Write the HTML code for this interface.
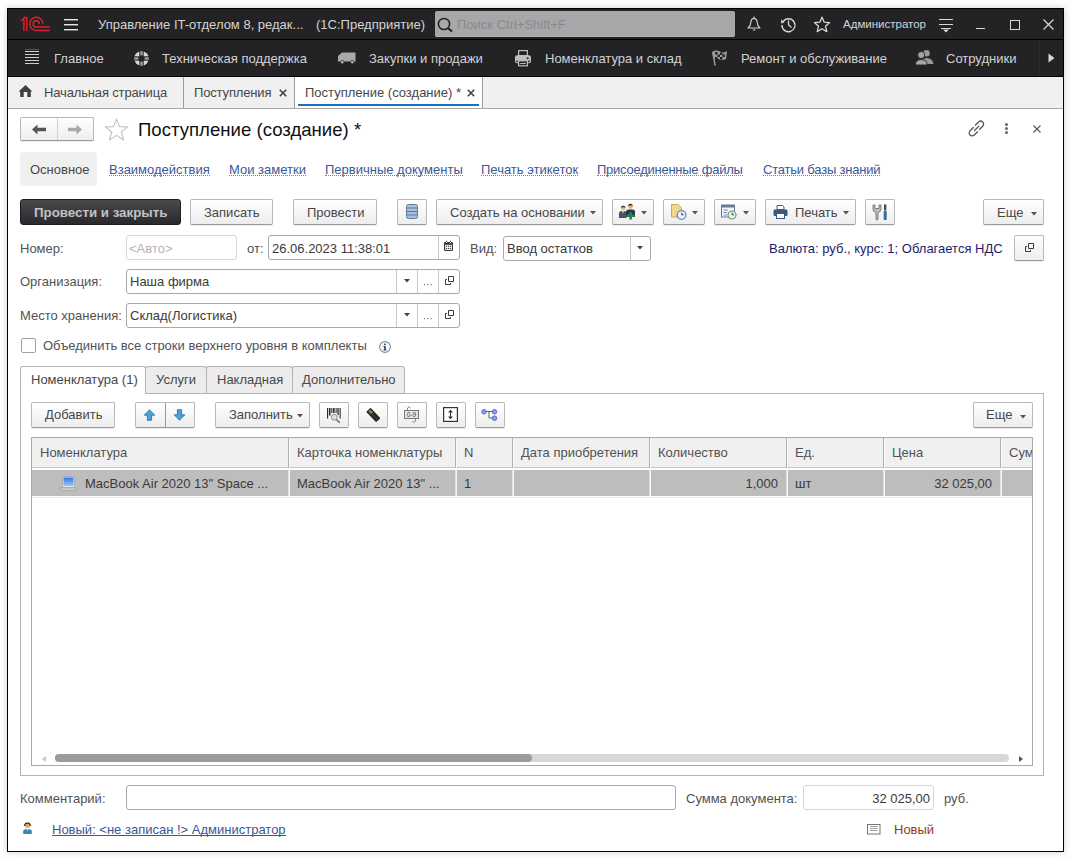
<!DOCTYPE html>
<html><head><meta charset="utf-8">
<style>
*{box-sizing:border-box;margin:0;padding:0}
html,body{width:1071px;height:859px;overflow:hidden;background:#fdfdfd;font-family:"Liberation Sans",sans-serif;font-size:13px;color:#525252}
.a{position:absolute}
.t{position:absolute;white-space:nowrap;line-height:15px;height:15px}
svg{position:absolute;overflow:visible}
#win{left:7px;top:8px;width:1057px;height:844px;border:1px solid #000;background:#fff;box-shadow:0 0 6px rgba(0,0,0,.18)}
.btn{position:absolute;height:26px;border:1px solid #b9b9b9;border-bottom-color:#9a9a9a;border-radius:2px;background:linear-gradient(#ffffff,#ededed);box-shadow:0 1px 0 rgba(0,0,0,.08)}
.fld{position:absolute;border:1px solid #a9a9a9;border-radius:3px;background:#fff}
.lnk{color:#3a5796;display:inline-block;line-height:13px;height:13px;border-bottom:1px dotted #6a80b0}
</style></head><body>
<div class="a" id="win"></div>
<!-- title bar -->
<div class="a" style="left:8px;top:9px;width:1055px;height:30px;background:#232326"></div>
<div class="a" style="left:8px;top:39px;width:1055px;height:1px;background:#000"></div>
<!-- section bar -->
<div class="a" style="left:8px;top:40px;width:1055px;height:36px;background:#232326"></div>
<div class="a" style="left:8px;top:76px;width:1055px;height:1px;background:#000"></div>
<!-- tab bar -->
<div class="a" style="left:8px;top:77px;width:1055px;height:31px;background:#f0f0f0"></div>
<div class="a" style="left:8px;top:108px;width:1055px;height:1px;background:#a8a8a8"></div>

<!-- title content -->
<svg style="left:20px;top:16px" width="32" height="17" viewBox="0 0 32 17">
 <g fill="none" stroke="#d9202c" stroke-width="1.5">
  <path d="M1 5 L3.9 2.2 V14.9"/><path d="M3.9 1.5 H6.7 V14.9"/>
  <path d="M22.9 7.9 A6.6 6.6 0 1 0 16.3 14.5 H29.8"/>
  <path d="M19.4 7.9 A3.1 3.1 0 1 0 16.3 11 H29.8"/>
 </g>
</svg>
<div class="a" style="left:64px;top:19px;width:14px;height:1px;background:#e8e8e8;box-shadow:0 1px 0 rgba(232,232,232,.4)"></div>
<div class="a" style="left:64px;top:24px;width:14px;height:1px;background:#e8e8e8;box-shadow:0 1px 0 rgba(232,232,232,.4)"></div>
<div class="a" style="left:64px;top:29px;width:14px;height:1px;background:#e8e8e8;box-shadow:0 1px 0 rgba(232,232,232,.4)"></div>
<div class="t" style="left:98px;top:17px;color:#d4d4d4">Управление IT-отделом 8, редак...</div>
<div class="t" style="left:316px;top:17px;color:#d4d4d4">(1С:Предприятие)</div>
<div class="a" style="left:435px;top:11px;width:300px;height:26px;background:#a7a7a9;border-radius:2px;border-bottom:1px solid #b5b5b7"></div>
<svg style="left:437px;top:17px" width="17" height="16" viewBox="0 0 17 16"><circle cx="7" cy="7" r="5.6" fill="none" stroke="#1e1e1e" stroke-width="1.5"/><path d="M11 11 L15 14.5" stroke="#1e1e1e" stroke-width="2.2"/></svg>
<div class="t" style="left:457px;top:17px;color:#8a8a8c">Поиск Ctrl+Shift+F</div>
<svg style="left:746px;top:16px" width="16" height="17" viewBox="746 16 16 17"><g fill="none" stroke="#d4d4d4" stroke-width="1.1" stroke-linejoin="round"><path d="M754 16.6 V18.2"/><path d="M748 28 Q750.6 26.3 750.8 22.6 Q751 18.6 754 18.4 Q757 18.6 757.2 22.6 Q757.4 26.3 760 28 Z"/></g><path d="M752.3 29.6 H755.7 L754 30.9Z" fill="#d4d4d4"/></svg>
<svg style="left:780px;top:16px" width="17" height="17" viewBox="0 0 17 17"><path d="M3.2 5.5 A6.5 6.5 0 1 1 2 9" fill="none" stroke="#d8d8d8" stroke-width="1.4"/><path d="M1 3.5 L4.5 6.5 L1.2 7.5 Z" fill="#d8d8d8"/><path d="M8.5 4.5 V8.8 L11.5 11.5" fill="none" stroke="#d8d8d8" stroke-width="1.3"/></svg>
<svg style="left:813px;top:16px" width="18" height="17" viewBox="0 0 18 17"><path d="M9 1.2 L11.2 6.2 L16.6 6.6 L12.5 10.2 L13.8 15.6 L9 12.7 L4.2 15.6 L5.5 10.2 L1.4 6.6 L6.8 6.2 Z" fill="none" stroke="#d8d8d8" stroke-width="1.3" stroke-linejoin="round"/></svg>
<div class="t" style="left:843px;top:17px;font-size:11.5px;color:#d4d4d4">Администратор</div>
<div class="a" style="left:939px;top:19px;width:14px;height:1.3px;background:#d8d8d8"></div>
<div class="a" style="left:939px;top:24px;width:14px;height:1.3px;background:#d8d8d8"></div>
<div class="a" style="left:941px;top:28px;width:10px;height:1.3px;background:#d8d8d8"></div>
<svg style="left:942px;top:29px" width="8" height="4" viewBox="0 0 8 4"><path d="M1 0.5 H7 L4 3.5Z" fill="#d8d8d8"/></svg>
<div class="a" style="left:976px;top:28px;width:9px;height:1.3px;background:#d8d8d8"></div>
<div class="a" style="left:1010px;top:20px;width:10px;height:10px;border:1.3px solid #d8d8d8"></div>
<svg style="left:1043px;top:19px" width="11" height="11" viewBox="0 0 11 11"><path d="M0.5 0.5 L10.5 10.5 M10.5 0.5 L0.5 10.5" stroke="#d8d8d8" stroke-width="1.2"/></svg>

<!-- section content -->
<svg style="left:25px;top:49px" width="14" height="16" viewBox="0 0 14 16"><g stroke="#d0d0d0" stroke-width="1"><path d="M0 2.5H14M0 5.5H14M0 8.5H14M0 11.5H14M0 14.5H14"/></g><path d="M0 0.5H14" stroke="#555" stroke-width="1"/></svg>
<div class="t" style="left:54px;top:51px;color:#d2d2d2">Главное</div>
<svg style="left:134px;top:51px" width="15" height="15" viewBox="0 0 15 15"><circle cx="7.5" cy="7.5" r="7.3" fill="#d6d6d6"/><rect x="5.3" y="0" width="4.4" height="15" fill="#232326"/><rect x="0" y="5.3" width="15" height="4.4" fill="#232326"/><g fill="#989898"><rect x="6.2" y="0.2" width="2.6" height="4.2"/><rect x="6.2" y="10.6" width="2.6" height="4.2"/><rect x="0.2" y="6.2" width="4.2" height="2.6"/><rect x="10.6" y="6.2" width="4.2" height="2.6"/></g></svg>
<div class="t" style="left:162px;top:51px;color:#d2d2d2">Техническая поддержка</div>
<svg style="left:338px;top:52px" width="18" height="12" viewBox="0 0 18 12"><path d="M0 4 L4 0.5 H17.5 V9.5 H16 A1.8 1.8 0 0 0 12.5 9.5 H6 A1.8 1.8 0 0 0 2.5 9.5 H0 Z" fill="#a9a9a9"/><circle cx="4.2" cy="10" r="1.5" fill="#a9a9a9"/><circle cx="14.3" cy="10" r="1.5" fill="#a9a9a9"/></svg>
<div class="t" style="left:369px;top:51px;color:#d2d2d2">Закупки и продажи</div>
<svg style="left:514px;top:49px" width="18" height="18" viewBox="0 0 18 18"><rect x="4.6" y="1.6" width="8.8" height="5" fill="#232326" stroke="#bdbdbd" stroke-width="1.2"/><rect x="1" y="6.3" width="16" height="8" rx="2" fill="#bdbdbd"/><circle cx="13.6" cy="9.3" r="1" fill="#232326"/><rect x="2.3" y="11.6" width="1.6" height="1.6" fill="#232326"/><rect x="14.1" y="11.6" width="1.6" height="1.6" fill="#232326"/><rect x="4.6" y="11.8" width="8.8" height="5" fill="#232326" stroke="#bdbdbd" stroke-width="1.2"/><path d="M6.2 14.5H11.8" stroke="#bdbdbd" stroke-width="1"/></svg>
<div class="t" style="left:545px;top:51px;color:#d2d2d2">Номенклатура и склад</div>
<svg style="left:711px;top:49px" width="17" height="17" viewBox="0 0 17 17"><path d="M1 3 Q5 0.5 9 2.5 T16 2 L15 10 Q11 12 7.5 10 T2.5 10.5 Z" fill="#9c9c9c"/><g fill="#232326"><rect x="4" y="3" width="2.5" height="2.5"/><rect x="9" y="3.5" width="2.5" height="2.5"/><rect x="6.5" y="5.5" width="2.5" height="2.5"/><rect x="11.5" y="5.5" width="2.5" height="2.5"/><rect x="4" y="8" width="2.5" height="2.5"/><rect x="9" y="8" width="2.5" height="2.5"/></g><path d="M2 3 L4 16.5" stroke="#9c9c9c" stroke-width="1.5"/></svg>
<div class="t" style="left:741px;top:51px;color:#d2d2d2">Ремонт и обслуживание</div>
<svg style="left:915px;top:49px" width="19" height="17" viewBox="0 0 19 17"><circle cx="11.5" cy="4.2" r="3.3" fill="#9a9a9a"/><path d="M6.5 15 Q7 9 11.5 9 Q17.5 9 18.5 15Z" fill="#9a9a9a"/><circle cx="6.2" cy="6" r="3.5" fill="#a6a6a6" stroke="#232326" stroke-width="0.9"/><path d="M0.3 16 Q0.5 10.5 6.2 10.5 Q12 10.5 12.2 16Z" fill="#a6a6a6" stroke="#232326" stroke-width="0.9"/></svg>
<div class="t" style="left:946px;top:51px;color:#d2d2d2">Сотрудники</div>
<div class="a" style="left:1039px;top:40px;width:1px;height:36px;background:#2c2c2f"></div>
<svg style="left:1048px;top:53px" width="7" height="10" viewBox="0 0 7 10"><path d="M0.5 0.5 L6.5 5 L0.5 9.5Z" fill="#d8d8d8"/></svg>

<!-- tab bar content -->
<svg style="left:18px;top:85px" width="15" height="13" viewBox="0 0 15 13"><path d="M7.5 0 L14.4 6.5 H12.8 V12 H9.3 V6.9 H5.7 V12 H2.2 V6.5 H0.6 Z" fill="#404040"/></svg>
<div class="t" style="left:44px;top:85px;color:#474747;letter-spacing:-0.15px">Начальная страница</div>
<div class="a" style="left:183px;top:77px;width:1px;height:31px;background:#9c9c9c"></div>
<div class="t" style="left:194px;top:85px;color:#474747;letter-spacing:-0.15px">Поступления</div>
<svg style="left:279px;top:89px" width="8" height="8" viewBox="0 0 8 8"><path d="M0.8 0.8 L7.2 7.2 M7.2 0.8 L0.8 7.2" stroke="#404040" stroke-width="1.6"/></svg>
<div class="a" style="left:294px;top:77px;width:189px;height:31px;background:#fff;border-left:1px solid #9c9c9c;border-right:1px solid #9c9c9c"></div>
<div class="t" style="left:305px;top:85px;color:#474747">Поступление (создание) *</div>
<svg style="left:467px;top:89px" width="8" height="8" viewBox="0 0 8 8"><path d="M0.8 0.8 L7.2 7.2 M7.2 0.8 L0.8 7.2" stroke="#404040" stroke-width="1.6"/></svg>
<div class="a" style="left:298px;top:104px;width:181px;height:2px;background:#1a70c5"></div>

<!-- form header -->
<div class="btn" style="left:20px;top:117px;width:74px;height:24px"></div>
<div class="a" style="left:57px;top:118px;width:1px;height:22px;background:#d0d0d0"></div>
<svg style="left:32px;top:124px" width="14" height="11" viewBox="0 0 14 11"><path d="M0 5.5 L5.5 0.5 V3.8 H14 V7.2 H5.5 V10.5 Z" fill="#555"/></svg>
<svg style="left:68px;top:124px" width="14" height="11" viewBox="0 0 14 11"><path d="M14 5.5 L8.5 0.5 V3.8 H0 V7.2 H8.5 V10.5 Z" fill="#a8a8a8"/></svg>
<svg style="left:104px;top:118px" width="25" height="23" viewBox="0 0 25 23"><path d="M12.5 1 L15.5 8.6 L23.8 8.9 L17.3 14 L19.6 22 L12.5 17.4 L5.4 22 L7.7 14 L1.2 8.9 L9.5 8.6 Z" fill="#fff" stroke="#c4c4c4" stroke-width="1.1" stroke-linejoin="round"/></svg>
<div class="t" style="left:138px;top:122px;font-size:18.6px;color:#111">Поступление (создание) *</div>
<svg style="left:968px;top:120px" width="17" height="17" viewBox="0 0 17 17"><g fill="none" stroke="#555" stroke-width="1.3"><path d="M7 5.5 L10.5 2 A2.8 2.8 0 0 1 14.7 6.2 L11.2 9.7"/><path d="M9.8 11.5 L6.3 15 A2.8 2.8 0 0 1 2.1 10.8 L5.6 7.3"/><path d="M6 11 L11 6"/></g></svg>
<div class="a" style="left:1005px;top:123px;width:3px;height:3px;border-radius:50%;background:#666"></div>
<div class="a" style="left:1005px;top:127px;width:3px;height:3px;border-radius:50%;background:#666"></div>
<div class="a" style="left:1005px;top:131px;width:3px;height:3px;border-radius:50%;background:#666"></div>
<svg style="left:1033px;top:125px" width="8" height="8" viewBox="0 0 8 8"><path d="M0.5 0.5 L7.5 7.5 M7.5 0.5 L0.5 7.5" stroke="#555" stroke-width="1.1"/></svg>

<!-- links row -->
<div class="a" style="left:20px;top:152px;width:77px;height:34px;background:#f0f0f0;border-radius:4px"></div>
<div class="t" style="left:30px;top:162px;color:#474747">Основное</div>
<div class="t" style="left:109px;top:162px;color:#3a5796"><span class="lnk">Взаимодействия</span></div>
<div class="t" style="left:229px;top:162px;color:#3a5796"><span class="lnk">Мои заметки</span></div>
<div class="t" style="left:325px;top:162px;color:#3a5796"><span class="lnk">Первичные документы</span></div>
<div class="t" style="left:481px;top:162px;color:#3a5796"><span class="lnk">Печать этикеток</span></div>
<div class="t" style="left:597px;top:162px;color:#3a5796"><span class="lnk" style="letter-spacing:-0.25px">Присоединенные файлы</span></div>
<div class="t" style="left:763px;top:162px;color:#3a5796"><span class="lnk" style="letter-spacing:-0.2px">Статьи базы знаний</span></div>

<!-- command bar -->
<div class="a" style="left:20px;top:199px;width:161px;height:26px;border-radius:3px;background:linear-gradient(#4a494e,#29292c);border:1px solid #1e1e20"></div>
<div class="t" style="left:34px;top:205px;font-weight:bold;font-size:13.3px;color:#c2c2c2">Провести и закрыть</div>
<div class="btn" style="left:190px;top:199px;width:83px"></div>
<div class="t" style="left:204px;top:205px;color:#474747">Записать</div>
<div class="btn" style="left:293px;top:199px;width:84px"></div>
<div class="t" style="left:307px;top:205px;color:#474747">Провести</div>
<div class="btn" style="left:397px;top:199px;width:30px"></div>
<svg style="left:406px;top:204px" width="12" height="15" viewBox="0 0 12 15"><rect x="0.5" y="0.5" width="11" height="14" rx="2" fill="#a9c2dc" stroke="#5f7b98"/><path d="M1 4H11M1 7.5H11M1 11H11" stroke="#5f7b98" stroke-width="1"/></svg>
<div class="btn" style="left:436px;top:199px;width:167px"></div>
<div class="t" style="left:450px;top:205px;color:#474747">Создать на основании</div>
<svg style="left:590px;top:211px" width="6" height="4" viewBox="0 0 6 4"><path d="M0 0H6L3 3.5Z" fill="#555"/></svg>
<div class="btn" style="left:612px;top:199px;width:42px"></div>
<svg style="left:618px;top:203px" width="18" height="18" viewBox="618 203 18 18"><path d="M619 218 V213.5 Q619 211 621.5 211 H624 Q626.5 211 626.5 213.5 V218Z" fill="#4a5060"/><path d="M622.2 211 L623 214 L623.8 211Z" fill="#e8e8e8"/><circle cx="623.2" cy="208.3" r="2.3" fill="#e8c080"/><path d="M620.9 208 Q621 205.8 623.2 205.8 Q625.5 205.8 625.5 208 Q624.5 207 623.2 207.2 Q621.8 207 620.9 208Z" fill="#3a2a1a"/><path d="M626 217 V211.5 Q626 209.5 628.5 209.5 H632.5 Q635 209.5 635 211.5 V217Z" fill="#2a3450"/><circle cx="630.4" cy="206.5" r="2.4" fill="#e0b878"/><path d="M628 206.3 Q628 203.8 630.4 203.8 Q632.8 203.8 632.8 206.3 Q631.8 205.2 630.4 205.4 Q629 205.2 628 206.3Z" fill="#2a1a0a"/><path d="M629.3 212 H631.9 V214.4 H634.5 V217 H631.9 V219.6 H629.3 V217 H626.6 V214.4 H629.3Z" fill="#1a8a40"/></svg>
<svg style="left:641px;top:211px" width="6" height="4" viewBox="0 0 6 4"><path d="M0 0H6L3 3.5Z" fill="#555"/></svg>
<div class="btn" style="left:663px;top:199px;width:42px"></div>
<svg style="left:671px;top:204px" width="16" height="16" viewBox="0 0 16 16"><path d="M0.5 0.5H7L10.5 4V13H0.5Z" fill="#f0d890" stroke="#c8a850" stroke-width="1"/><circle cx="10.5" cy="11" r="4.3" fill="#eef2f8" stroke="#6a88b8" stroke-width="1.3"/><path d="M10.5 8.5V11H12.5" stroke="#6a88b8" stroke-width="1"/></svg>
<svg style="left:692px;top:211px" width="6" height="4" viewBox="0 0 6 4"><path d="M0 0H6L3 3.5Z" fill="#555"/></svg>
<div class="btn" style="left:714px;top:199px;width:42px"></div>
<svg style="left:721px;top:204px" width="16" height="16" viewBox="0 0 16 16"><rect x="0.5" y="1" width="13" height="12" fill="#f4f6fa" stroke="#6a7a98" stroke-width="1"/><rect x="0.5" y="1" width="13" height="2.5" fill="#6a7a98"/><path d="M2.5 6H7M2.5 8.5H6M2.5 11H6" stroke="#7a8ab0" stroke-width="1"/><circle cx="11" cy="11" r="4" fill="#e8f4ea" stroke="#6a9a7a" stroke-width="1.2"/><path d="M11 8.5V11H13" stroke="#6a9a7a" stroke-width="1"/></svg>
<svg style="left:743px;top:211px" width="6" height="4" viewBox="0 0 6 4"><path d="M0 0H6L3 3.5Z" fill="#555"/></svg>
<div class="btn" style="left:765px;top:199px;width:91px"></div>
<svg style="left:773px;top:205px" width="15" height="14" viewBox="0 0 15 14"><path d="M4 0.5H9.5L11 2V4.5H4Z" fill="#fff" stroke="#4a5a6a" stroke-width="1"/><rect x="0.5" y="4.5" width="14" height="6.5" rx="1.3" fill="#3a5a7a"/><rect x="3.5" y="8.5" width="8" height="5" fill="#fff" stroke="#3a5a7a" stroke-width="1"/></svg>
<div class="t" style="left:795px;top:205px;color:#474747">Печать</div>
<svg style="left:843px;top:211px" width="6" height="4" viewBox="0 0 6 4"><path d="M0 0H6L3 3.5Z" fill="#555"/></svg>
<div class="btn" style="left:865px;top:199px;width:30px"></div>
<svg style="left:872px;top:204px" width="16" height="16" viewBox="0 0 16 16"><path d="M1 1 V5 Q1 8 4 8.5 V15 Q4 16 5 16 Q6 16 6 15 V8.5 Q9 8 9 5 V1 L7 1 V4.5 H3 V1Z" fill="#bcbcbc" stroke="#6a6a6a" stroke-width=".8"/><rect x="12" y="0.5" width="2.3" height="6" fill="#3a4a5a"/><rect x="11.7" y="7" width="3" height="9" rx=".8" fill="#3a6a9a"/></svg>
<div class="btn" style="left:983px;top:199px;width:61px"></div>
<div class="t" style="left:997px;top:205px;color:#474747">Еще</div>
<svg style="left:1031px;top:212px" width="6" height="4" viewBox="0 0 6 4"><path d="M0 0H6L3 3.5Z" fill="#555"/></svg>

<!-- fields -->
<div class="t" style="left:20px;top:241px;color:#525252">Номер:</div>
<div class="fld" style="left:126px;top:235px;width:111px;height:25px;border-color:#d8d8d8"></div>
<div class="t" style="left:129px;top:241px;color:#b4b4b4">&lt;Авто&gt;</div>
<div class="t" style="left:247px;top:241px;color:#525252">от:</div>
<div class="fld" style="left:268px;top:235px;width:192px;height:25px"></div>
<div class="a" style="left:438px;top:236px;width:1px;height:23px;background:#c8c8c8"></div>
<div class="t" style="left:272px;top:241px;color:#3a3a3a">26.06.2023 11:38:01</div>
<svg style="left:444px;top:240px" width="9" height="11" viewBox="444 240 9 11"><rect x="444" y="242" width="9" height="9" rx="1.2" fill="#383838"/><rect x="445.1" y="244.8" width="6.8" height="5.1" fill="#fff"/><g fill="#383838"><circle cx="446.5" cy="246.3" r=".7"/><circle cx="448.5" cy="246.3" r=".7"/><circle cx="450.5" cy="246.3" r=".7"/><circle cx="446.5" cy="248.4" r=".7"/><circle cx="448.5" cy="248.4" r=".7"/><circle cx="450.5" cy="248.4" r=".7"/></g><rect x="446" y="242" width="1.1" height="1" fill="#fff"/><rect x="450" y="242" width="1.1" height="1" fill="#fff"/><rect x="446" y="240.8" width="1.1" height="1.1" fill="#383838"/><rect x="450" y="240.8" width="1.1" height="1.1" fill="#383838"/></svg>
<div class="t" style="left:470px;top:241px;color:#525252">Вид:</div>
<div class="fld" style="left:503px;top:236px;width:148px;height:25px"></div>
<div class="a" style="left:630px;top:237px;width:1px;height:23px;background:#c8c8c8"></div>
<div class="t" style="left:507px;top:241px;color:#3a3a3a">Ввод остатков</div>
<svg style="left:637px;top:246px" width="6" height="4" viewBox="0 0 6 4"><path d="M0 0H6L3 3.5Z" fill="#444"/></svg>
<div class="t" style="left:769px;top:241px;color:#1c1c6e">Валюта: руб., курс: 1; Облагается НДС</div>
<div class="btn" style="left:1014px;top:235px;width:30px;height:26px"></div>
<svg style="left:1025px;top:243px" width="9" height="9" viewBox="0 0 9 9"><path d="M3.5 0.5H8.5V5.5H3.5Z" fill="none" stroke="#3a3a3a" stroke-width="1"/><path d="M2 3.5H0.5V8.5H5.5V7" fill="none" stroke="#3a3a3a" stroke-width="1"/></svg>

<div class="t" style="left:20px;top:274px;color:#525252">Организация:</div>
<div class="fld" style="left:126px;top:269px;width:334px;height:25px"></div>
<div class="a" style="left:396px;top:270px;width:1px;height:23px;background:#c8c8c8"></div>
<div class="a" style="left:417px;top:270px;width:1px;height:23px;background:#c8c8c8"></div>
<div class="a" style="left:438px;top:270px;width:1px;height:23px;background:#c8c8c8"></div>
<div class="t" style="left:130px;top:274px;color:#3a3a3a">Наша фирма</div>
<svg style="left:404px;top:279px" width="6" height="4" viewBox="0 0 6 4"><path d="M0 0H6L3 3.5Z" fill="#444"/></svg>
<svg style="left:423px;top:284px" width="10" height="2" viewBox="0 0 10 2"><g fill="#666"><rect x="1" y="0" width="1" height="1.2"/><rect x="4.3" y="0" width="1" height="1.2"/><rect x="7.6" y="0" width="1" height="1.2"/></g></svg>
<svg style="left:445px;top:276px" width="9" height="9" viewBox="0 0 9 9"><path d="M3.5 0.5H8.5V5.5H3.5Z" fill="none" stroke="#3a3a3a" stroke-width="1"/><path d="M2 3.5H0.5V8.5H5.5V7" fill="none" stroke="#3a3a3a" stroke-width="1"/></svg>

<div class="t" style="left:20px;top:308px;color:#525252">Место хранения:</div>
<div class="fld" style="left:126px;top:303px;width:334px;height:25px"></div>
<div class="a" style="left:396px;top:304px;width:1px;height:23px;background:#c8c8c8"></div>
<div class="a" style="left:417px;top:304px;width:1px;height:23px;background:#c8c8c8"></div>
<div class="a" style="left:438px;top:304px;width:1px;height:23px;background:#c8c8c8"></div>
<div class="t" style="left:130px;top:308px;color:#3a3a3a">Склад(Логистика)</div>
<svg style="left:404px;top:313px" width="6" height="4" viewBox="0 0 6 4"><path d="M0 0H6L3 3.5Z" fill="#444"/></svg>
<svg style="left:423px;top:318px" width="10" height="2" viewBox="0 0 10 2"><g fill="#666"><rect x="1" y="0" width="1" height="1.2"/><rect x="4.3" y="0" width="1" height="1.2"/><rect x="7.6" y="0" width="1" height="1.2"/></g></svg>
<svg style="left:445px;top:310px" width="9" height="9" viewBox="0 0 9 9"><path d="M3.5 0.5H8.5V5.5H3.5Z" fill="none" stroke="#3a3a3a" stroke-width="1"/><path d="M2 3.5H0.5V8.5H5.5V7" fill="none" stroke="#3a3a3a" stroke-width="1"/></svg>

<div class="a" style="left:21px;top:338px;width:15px;height:15px;border:1px solid #a0a0a0;border-radius:2px;background:#fff"></div>
<div class="t" style="left:43px;top:338px;color:#525252">Объединить все строки верхнего уровня в комплекты</div>
<svg style="left:379px;top:341px" width="12" height="12" viewBox="0 0 12 12"><circle cx="6" cy="6" r="5.4" fill="#f6f9fc" stroke="#8c8c8c" stroke-width="1.1"/><rect x="5.1" y="2.6" width="1.7" height="1.5" fill="#2c4660"/><path d="M4.4 5H6.8V8.5H7.6V9.4H4.4V8.5H5.1V5.9H4.4Z" fill="#2c4660"/></svg>

<!-- tabs -->
<div class="a" style="left:20px;top:393px;width:1024px;height:383px;border:1px solid #b4b4b4;background:#fff"></div>
<div class="a" style="left:145px;top:366px;width:62px;height:27px;border:1px solid #b4b4b4;border-bottom:none;border-radius:3px 3px 0 0;background:#ececec"></div>
<div class="a" style="left:206px;top:366px;width:87px;height:27px;border:1px solid #b4b4b4;border-bottom:none;border-radius:3px 3px 0 0;background:#ececec"></div>
<div class="a" style="left:292px;top:366px;width:113px;height:27px;border:1px solid #b4b4b4;border-bottom:none;border-radius:3px 3px 0 0;background:#ececec"></div>
<div class="a" style="left:20px;top:366px;width:126px;height:28px;border:1px solid #b4b4b4;border-bottom:none;border-radius:3px 3px 0 0;background:#fff"></div>
<div class="t" style="left:31px;top:372px;color:#474747">Номенклатура (1)</div>
<div class="t" style="left:156px;top:372px;color:#474747">Услуги</div>
<div class="t" style="left:217px;top:372px;color:#474747">Накладная</div>
<div class="t" style="left:302px;top:372px;color:#474747">Дополнительно</div>

<!-- tab toolbar -->
<div class="btn" style="left:31px;top:402px;width:84px;height:26px"></div>
<div class="t" style="left:45px;top:407px;color:#474747">Добавить</div>
<div class="btn" style="left:135px;top:402px;width:60px;height:26px"></div>
<div class="a" style="left:165px;top:403px;width:1px;height:24px;background:#9a9a9a"></div>
<svg style="left:143px;top:409px" width="13" height="12" viewBox="0 0 13 12"><path d="M6.5 0.8 L11.8 6.2 H8.6 V11.3 H4.4 V6.2 H1.2 Z" fill="#4aa2dc" stroke="#2a6a98" stroke-width=".8" stroke-linejoin="round"/></svg>
<svg style="left:173px;top:409px" width="13" height="12" viewBox="0 0 13 12"><path d="M6.5 11.2 L11.8 5.8 H8.6 V0.7 H4.4 V5.8 H1.2 Z" fill="#4aa2dc" stroke="#2a6a98" stroke-width=".8" stroke-linejoin="round"/></svg>
<div class="btn" style="left:215px;top:402px;width:95px;height:26px"></div>
<div class="t" style="left:229px;top:407px;color:#474747">Заполнить</div>
<svg style="left:297px;top:414px" width="6" height="4" viewBox="0 0 6 4"><path d="M0 0H6L3 3.5Z" fill="#555"/></svg>
<div class="btn" style="left:319px;top:402px;width:30px;height:26px"></div>
<svg style="left:326px;top:407px" width="16" height="17" viewBox="326 407 16 17"><g fill="#2a2a2a"><rect x="327" y="408" width="1.1" height="10.5"/><rect x="328.9" y="408" width="1.6" height="7.5"/><rect x="331.3" y="408" width="1" height="5"/><rect x="333" y="408" width="1.6" height="5"/><rect x="335.6" y="408" width="1" height="5"/><rect x="337.4" y="408" width="1.3" height="7"/><rect x="339.6" y="408" width="1.1" height="10.5"/></g><circle cx="334.3" cy="417.3" r="2.9" fill="#dcdff4" stroke="#8a8a98" stroke-width="1"/><path d="M336.4 419.5 L339.8 422.8" stroke="#6a6a6a" stroke-width="1.6"/></svg>
<div class="btn" style="left:358px;top:402px;width:30px;height:26px"></div>
<svg style="left:365px;top:407px" width="16" height="16" viewBox="365 407 16 16"><path d="M366.8 411.2 L369.8 408.4 Q370.6 407.8 371.3 408.5 L379.8 417.6 Q380.4 418.4 379.7 419 L376.8 421.6 Q376 422.2 375.4 421.5 L366.8 412.6 Q366.2 411.9 366.8 411.2Z" fill="#2b2721"/><path d="M368.3 411.3 L370.2 409.6 L373.2 412.6 L371.3 414.3Z" fill="#8a8068"/><g fill="#5a5448"><circle cx="373.5" cy="415.5" r=".5"/><circle cx="375" cy="417" r=".5"/><circle cx="376.5" cy="418.5" r=".5"/></g></svg>
<div class="btn" style="left:397px;top:402px;width:30px;height:26px"></div>
<svg style="left:403px;top:406px" width="18" height="18" viewBox="0 0 18 18"><rect x="1.5" y="4.5" width="14" height="8" fill="#e4e4e4" stroke="#777" stroke-width="1"/><path d="M4.5 4.5 V2 L6 0.8 L7.5 2" fill="none" stroke="#777" stroke-width=".9"/><path d="M12.5 12.5 V15 L11 16.5 L9.5 15" fill="none" stroke="#777" stroke-width=".9"/><text x="8.5" y="11" font-family="Liberation Sans" font-size="6.5" text-anchor="middle" fill="#444">0-9</text></svg>
<div class="btn" style="left:436px;top:402px;width:30px;height:26px"></div>
<svg style="left:443px;top:407px" width="15" height="15" viewBox="0 0 15 15"><rect x="0.6" y="0.6" width="13.8" height="13.8" fill="#fff" stroke="#333" stroke-width="1.2"/><path d="M7.5 3 V12" stroke="#333" stroke-width="1"/><path d="M5 5.5 L7.5 2.8 L10 5.5Z M5 9.5 L7.5 12.2 L10 9.5Z" fill="#333"/></svg>
<div class="btn" style="left:475px;top:402px;width:30px;height:26px"></div>
<svg style="left:481px;top:409px" width="17" height="12" viewBox="0 0 17 12"><path d="M3 2.5 H13 M8 2.5 V9 H13" fill="none" stroke="#666" stroke-width="1"/><circle cx="3" cy="2.8" r="2.3" fill="#8aa0e0" stroke="#4a60b0" stroke-width=".8"/><circle cx="13.5" cy="2.8" r="2.3" fill="#8aa0e0" stroke="#4a60b0" stroke-width=".8"/><circle cx="13.5" cy="9.2" r="2.3" fill="#8aa0e0" stroke="#4a60b0" stroke-width=".8"/></svg>
<div class="btn" style="left:973px;top:402px;width:60px;height:26px"></div>
<div class="t" style="left:986px;top:407px;color:#474747">Еще</div>
<svg style="left:1020px;top:415px" width="6" height="4" viewBox="0 0 6 4"><path d="M0 0H6L3 3.5Z" fill="#555"/></svg>

<!-- table -->
<div class="a" style="left:31px;top:437px;width:1002px;height:329px;border:1px solid #a9a9a9;background:#fff;overflow:hidden">
 <div class="a" style="left:0;top:0;width:1000px;height:30px;background:#f0f0f0;border-bottom:1px solid #c6c6c6"></div>
 <div class="a" style="left:0;top:32px;width:1000px;height:26px;background:#bdbdbd"></div>
 <div class="a" style="left:0;top:59px;width:1000px;height:1px;background:#e6e6e6"></div>
 <div class="a" style="left:256px;top:0;width:1px;height:30px;background:#b0b0b0"></div><div class="a" style="left:257px;top:0;width:1px;height:30px;background:#fbfbfb"></div><div class="a" style="left:256px;top:32px;width:1px;height:26px;background:#e0e0e0"></div><div class="a" style="left:257px;top:32px;width:1px;height:26px;background:#f6f6f6"></div>
 <div class="a" style="left:423px;top:0;width:1px;height:30px;background:#b0b0b0"></div><div class="a" style="left:424px;top:0;width:1px;height:30px;background:#fbfbfb"></div><div class="a" style="left:423px;top:32px;width:1px;height:26px;background:#e0e0e0"></div><div class="a" style="left:424px;top:32px;width:1px;height:26px;background:#f6f6f6"></div>
 <div class="a" style="left:480px;top:0;width:1px;height:30px;background:#b0b0b0"></div><div class="a" style="left:481px;top:0;width:1px;height:30px;background:#fbfbfb"></div><div class="a" style="left:480px;top:32px;width:1px;height:26px;background:#e0e0e0"></div><div class="a" style="left:481px;top:32px;width:1px;height:26px;background:#f6f6f6"></div>
 <div class="a" style="left:617px;top:0;width:1px;height:30px;background:#b0b0b0"></div><div class="a" style="left:618px;top:0;width:1px;height:30px;background:#fbfbfb"></div><div class="a" style="left:617px;top:32px;width:1px;height:26px;background:#e0e0e0"></div><div class="a" style="left:618px;top:32px;width:1px;height:26px;background:#f6f6f6"></div>
 <div class="a" style="left:754px;top:0;width:1px;height:30px;background:#b0b0b0"></div><div class="a" style="left:755px;top:0;width:1px;height:30px;background:#fbfbfb"></div><div class="a" style="left:754px;top:32px;width:1px;height:26px;background:#e0e0e0"></div><div class="a" style="left:755px;top:32px;width:1px;height:26px;background:#f6f6f6"></div>
 <div class="a" style="left:851px;top:0;width:1px;height:30px;background:#b0b0b0"></div><div class="a" style="left:852px;top:0;width:1px;height:30px;background:#fbfbfb"></div><div class="a" style="left:851px;top:32px;width:1px;height:26px;background:#e0e0e0"></div><div class="a" style="left:852px;top:32px;width:1px;height:26px;background:#f6f6f6"></div>
 <div class="a" style="left:968px;top:0;width:1px;height:30px;background:#b0b0b0"></div><div class="a" style="left:969px;top:0;width:1px;height:30px;background:#fbfbfb"></div><div class="a" style="left:968px;top:32px;width:1px;height:26px;background:#e0e0e0"></div><div class="a" style="left:969px;top:32px;width:1px;height:26px;background:#f6f6f6"></div>
 <div class="t" style="left:8px;top:7px;color:#525252">Номенклатура</div>
 <div class="t" style="left:265px;top:7px;color:#525252">Карточка номенклатуры</div>
 <div class="t" style="left:432px;top:7px;color:#525252">N</div>
 <div class="t" style="left:489px;top:7px;color:#525252">Дата приобретения</div>
 <div class="t" style="left:626px;top:7px;color:#525252">Количество</div>
 <div class="t" style="left:763px;top:7px;color:#525252">Ед.</div>
 <div class="t" style="left:860px;top:7px;color:#525252">Цена</div>
 <div class="t" style="left:977px;top:7px;color:#525252">Сумма</div>
 <svg style="left:27px;top:37px" width="18" height="16" viewBox="58 475 18 16"><defs><linearGradient id="scr" x1="0" y1="0" x2="0" y2="1"><stop offset="0" stop-color="#2a78e6"/><stop offset="1" stop-color="#9ccaf8"/></linearGradient></defs><rect x="61.5" y="476.5" width="12" height="11" fill="#e4e8ee" stroke="#a8b0bc" stroke-width="1"/><rect x="62.5" y="477.5" width="10" height="8.5" fill="url(#scr)"/><path d="M59.5 488 H75.5 L74.5 490.5 H60.5Z" fill="#d0d0d0" stroke="#9a9a9a" stroke-width=".6"/></svg>
 <div class="t" style="left:53px;top:38px;color:#3a3a3a">MacBook Air 2020 13" Space ...</div>
 <div class="t" style="left:265px;top:38px;color:#3a3a3a">MacBook Air 2020 13" ...</div>
 <div class="t" style="left:432px;top:38px;color:#3a3a3a">1</div>
 <div class="t" style="left:626px;top:38px;width:120px;text-align:right;color:#3a3a3a">1,000</div>
 <div class="t" style="left:763px;top:38px;color:#3a3a3a">шт</div>
 <div class="t" style="left:860px;top:38px;width:100px;text-align:right;color:#3a3a3a">32 025,00</div>
 <svg style="left:10px;top:318px" width="4" height="6" viewBox="0 0 4 6"><path d="M4 0 V6 L0 3Z" fill="#c8c8c8"/></svg>
 <div class="a" style="left:23px;top:316px;width:954px;height:8px;border-radius:4px;background:#d8d8d8"></div>
 <div class="a" style="left:23px;top:316px;width:477px;height:8px;border-radius:4px;background:#9c9c9c"></div>
 <svg style="left:987px;top:318px" width="4" height="6" viewBox="0 0 4 6"><path d="M0 0 V6 L4 3Z" fill="#555"/></svg>
</div>

<!-- footer -->
<div class="t" style="left:20px;top:791px;color:#525252">Комментарий:</div>
<div class="fld" style="left:126px;top:785px;width:550px;height:25px"></div>
<div class="t" style="left:686px;top:791px;color:#525252">Сумма документа:</div>
<div class="fld" style="left:803px;top:785px;width:131px;height:25px;border-color:#d4d4d4"></div>
<div class="t" style="left:810px;top:791px;width:120px;text-align:right;color:#3a3a3a">32 025,00</div>
<div class="t" style="left:944px;top:791px;color:#525252">руб.</div>
<svg style="left:23px;top:821px" width="10" height="14" viewBox="23 821 10 14"><path d="M23.2 834 V831.6 Q23.2 829.2 25.8 829.2 H29.2 Q31.8 829.2 31.8 831.6 V834Z" fill="#3a88b2"/><path d="M27 829.2 L27.5 831.2 L28 829.2Z" fill="#fff"/><circle cx="27.5" cy="825.3" r="2.7" fill="#dcae6c"/><path d="M24.6 826 A2.9 2.9 0 0 1 30.4 826" fill="none" stroke="#4a2e10" stroke-width="1.1"/></svg>
<div class="t" style="left:52px;top:822px;color:#3a5796"><span style="display:inline-block;line-height:13px;height:13px;border-bottom:1px solid #3a5796">Новый: &lt;не записан !&gt; Администратор</span></div>
<svg style="left:867px;top:824px" width="14" height="11" viewBox="867 824 14 11"><rect x="867.5" y="824.5" width="12.5" height="9.5" fill="#fff" stroke="#777" stroke-width="1"/><path d="M870 826.5H877.5M870 828.5H877.5M870 830.5H877.5" stroke="#888" stroke-width=".8"/></svg>
<div class="t" style="left:894px;top:822px;color:#92391c">Новый</div>
</body></html>
